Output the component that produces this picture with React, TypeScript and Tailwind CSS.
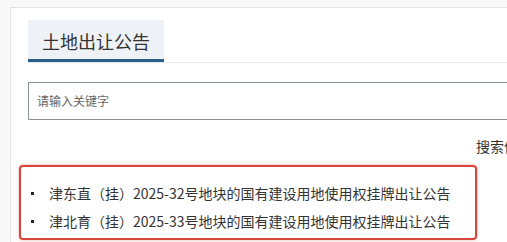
const font = { fontFamily: '"Microsoft YaHei", "Noto Sans CJK SC", "Liberation Sans", sans-serif' };

const items = [
  "津东直（挂）2025-32号地块的国有建设用地使用权挂牌出让公告",
  "津北育（挂）2025-33号地块的国有建设用地使用权挂牌出让公告",
];

export default function App() {
  return (
    <div className="w-[507px] h-[242px] overflow-hidden bg-[#f8f8f8]" style={font}>
      <div className="ml-[10px] mt-[7px] w-[700px] h-[300px] bg-white border-l border-t border-[#e3e3e3] pl-[17px] pt-[12px]">
        {/* tab bar */}
        <div className="flex border-b border-[#ececec]">
          <div className="w-[136px] h-[42px] bg-[#eef2f7] border-b-[3px] border-[#2c5d85] pl-[14px] pt-[9px] text-[18px] leading-[24px] text-[#333]">
            土地出让公告
          </div>
        </div>

        {/* search input */}
        <div className="mt-[19px] h-[38px] border border-[#8c9194] flex items-center pl-[8px] text-[12px] text-[#666]">
          请输入关键字
        </div>

        <div className="pl-[448px] mt-[18px] text-[14px] leading-[16px] text-[#333]">搜索信息</div>

        {/* result list */}
        <div className="-ml-[9px] mt-[11px] w-[458px] h-[75px] border-[2.5px] border-[#d8453b] rounded-[4px] shadow-[0_0_3px_rgba(216,69,59,0.5)] pt-[12px] pl-[9px]">
          {items.map((t) => (
            <div key={t} className="flex items-center h-[28px] text-[14px] text-[#333]">
              <span className="w-[3px] h-[3px] bg-[#222] ml-[1px] mr-[15px]" />
              <span>{t}</span>
            </div>
          ))}
        </div>
      </div>
    </div>
  );
}
